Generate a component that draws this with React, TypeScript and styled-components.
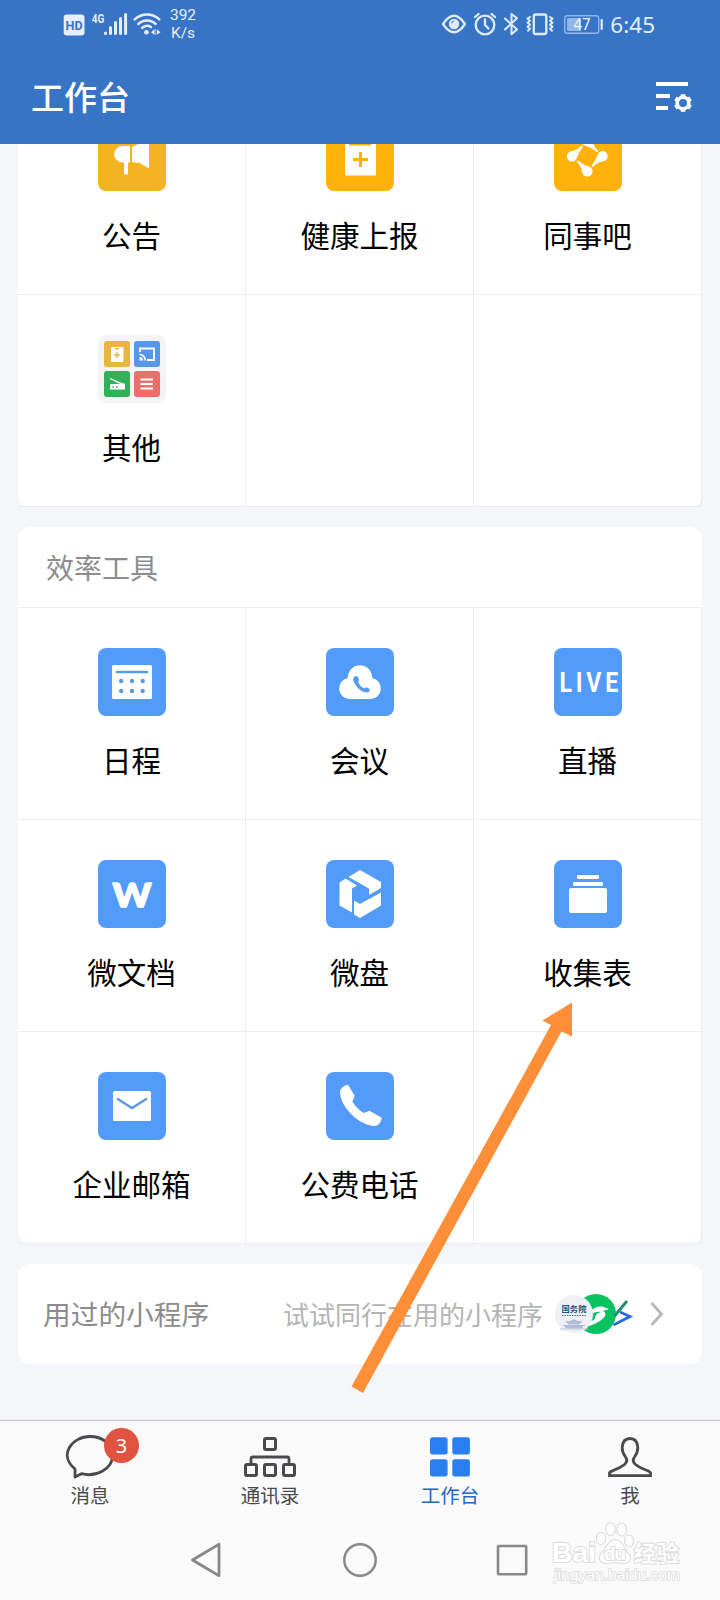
import React from 'react';
import styled, { createGlobalStyle } from 'styled-components';

const GlobalStyle = createGlobalStyle`
  * { box-sizing: border-box; }
  body { margin: 0; background: #f4f6fa; }
  svg { display: block; flex: none; }
`;

const Screen = styled.div`
  position: relative;
  width: 720px;
  height: 1600px;
  display: flex;
  flex-direction: column;
  overflow: hidden;
  background: #f4f6fa;
  font-family: 'Noto Sans CJK SC', sans-serif;
`;

const Header = styled.header`
  height: 144px;
  flex: none;
  background: #3874c6;
  color: #fff;
`;

const StatusBar = styled.div`
  height: 48px;
  display: flex;
  align-items: center;
  padding: 1px 65px 0 63px;
  font-family: 'Noto Sans', sans-serif;
`;

const NetSpeed = styled.div`
  width: 30px;
  margin: -1px auto 0 5px;
  text-align: center;
  font: 15.5px/18px Roboto, sans-serif;
  color: #e6eefa;
`;

const Clock = styled.span`
  margin-left: 6px;
  font-size: 22.5px;
  line-height: 47px;
  color: #e3edfa;
`;

const TitleBar = styled.div`
  height: 96px;
  display: flex;
  align-items: center;
  justify-content: space-between;
  padding: 2px 27px 0 31px;
`;

const Title = styled.h1`
  margin: -3px 0 0;
  font-size: 33px;
  line-height: 48px;
  font-weight: 500;
`;

const Content = styled.main`
  flex: 1;
  min-height: 0;
  overflow: hidden;
  display: flex;
  flex-direction: column;
  gap: 20px;
  padding-left: 18px;
`;

const Card = styled.section<{ $pull?: number }>`
  width: 684px;
  flex: none;
  margin-top: ${(p) => p.$pull ?? 0}px;
  background: #fff;
  border-radius: 12px;
`;

const CardTitle = styled.h2`
  margin: 0;
  height: 81px;
  padding-left: 28px;
  border-bottom: 1px solid #ebecee;
  font-size: 28px;
  line-height: 80px;
  font-weight: 400;
  color: #8c8c8c;
`;

const Grid = styled.div`
  display: grid;
  grid-template-columns: repeat(3, 228px);
  grid-auto-rows: 212px;
`;

const Cell = styled.div`
  display: flex;
  flex-direction: column;
  align-items: center;
  padding: 40px 0 0;
  border-right: 1px solid #ebecee;
  border-bottom: 1px solid #ebecee;
`;

const Tile = styled.div<{ $color: string }>`
  width: 68px;
  height: 68px;
  flex: none;
  border-radius: 8px;
  overflow: hidden;
  background: ${(p) => p.$color};
`;

const Label = styled.span`
  margin-top: 21px;
  font-size: 29.5px;
  line-height: 44px;
  color: #000;
`;

const MiniCard = styled.section`
  width: 684px;
  height: 100px;
  flex: none;
  display: flex;
  align-items: center;
  padding: 0 38px 0 25px;
  border-radius: 12px;
  background: #fff;
`;

const MiniTitle = styled.span`
  flex: 1;
  margin-top: -2px;
  font-size: 27.7px;
  color: #8c8c8c;
`;

const MiniHint = styled.span`
  font-size: 26px;
  color: #b4b4b4;
  margin: -2px 11px 0 0;
`;

const TabBar = styled.nav`
  height: 100px;
  flex: none;
  display: grid;
  grid-template-columns: repeat(4, 1fr);
  border-top: 1px solid #c3c4c8;
  background: #fafafa;
`;

const Tab = styled.div<{ $active?: boolean }>`
  position: relative;
  display: flex;
  flex-direction: column;
  align-items: center;
  padding-top: 12px;
  color: ${(p) => (p.$active ? '#2268c0' : '#484a4e')};
  font-size: 19.5px;
  line-height: 28px;
`;

const TabLabel = styled.span`
  margin-top: 2px;
`;

const Badge = styled.span`
  position: absolute;
  left: 104px;
  top: 7px;
  width: 35px;
  height: 35px;
  border-radius: 50%;
  background: #e15241;
  color: #fff;
  text-align: center;
  font: 20px/35px 'Noto Sans', sans-serif;
`;

const SystemNav = styled.div`
  height: 80px;
  flex: none;
  display: flex;
  justify-content: center;
  gap: 116px;
  padding-top: 20px;
  background: #fafafa;
`;

const ArrowLayer = styled.svg`
  position: absolute;
  left: 340px;
  top: 990px;
  pointer-events: none;
`;

const Watermark = styled.svg`
  position: absolute;
  left: 545px;
  top: 1515px;
  pointer-events: none;
`;

const blue = '#539bf9';

const StatusLeft = () => (
  <svg width="100" height="30" viewBox="63 10 100 30">
    <rect x="63.7" y="14.5" width="20.8" height="21" rx="3" fill="#e6eefa" />
    <text x="74.1" y="30" textAnchor="middle" fontFamily="Roboto" fontSize="13.5" fontWeight="700" fill="#3874c6" textLength="17" lengthAdjust="spacingAndGlyphs">HD</text>
    <text x="91.8" y="22.5" fontFamily="Roboto" fontSize="13" fontWeight="700" fill="#e6eefa" textLength="12.5" lengthAdjust="spacingAndGlyphs">4G</text>
    <path d="M105.5 33v.6M110.5 27.5v6M115.5 22.5v11M120.5 18.500v15M125.600 14.500v19" stroke="#e6eefa" strokeWidth="3" strokeLinecap="round" />
    <g fill="none" stroke="#e6eefa" strokeWidth="2.500" strokeLinecap="round">
      <path d="M134.700 19.300a18 18 0 0 1 24.600 0M138.300 24a12.500 12.500 0 0 1 17.400 0M142 28a7.500 7.500 0 0 1 9-1" />
    </g>
    <circle cx="146.500" cy="32.300" r="2.300" fill="#e6eefa" />
    <path d="M151 32.200l3.300-3v5.500zM160.500 32.200l-3.700-3v5.500z" fill="#e6eefa" />
    <path d="M155 29v6" stroke="#e6eefa" strokeWidth=".8" />
  </svg>
);

const StatusRight = () => (
  <svg width="164" height="30" viewBox="441 10 164 30" fill="none" stroke="#e0ebfa" strokeWidth="2.300" strokeLinecap="round" strokeLinejoin="round">
    <path d="M444 24q11-16.500 22 0q-11 16.500-22 0z" />
    <circle cx="455" cy="24" r="5.200" fill="#e0ebfa" stroke="none" />
    <path d="M452.800 23a2.500 2.500 0 0 1 2-2" stroke="#3874c6" strokeWidth="1" />
    <circle cx="486" cy="25" r="9.300" />
    <path d="M486 19.500V25l3.500 3.500M476 17l3.500-3M492.500 14l3.500 3" />
    <path d="M506 18.500L518 29.500l-5.500 4.700V14l5.500 4.300L506 29.500" strokeWidth="2" />
    <rect x="534.800" y="14.500" width="12.500" height="19.500" rx="2" />
    <path d="M531 17l-2.500 1.700 2.500 2-2.500 2 2.500 2-2.500 2 2.500 2-2 2M551 17l2.500 1.700-2.500 2 2.500 2-2.500 2 2.500 2-2.500 2 2 2" strokeWidth="2" />
    <rect x="565.700" y="15.700" width="34" height="17.600" rx="2.500" stroke="#90b6ea" strokeWidth="1.400" />
    <rect x="568" y="18" width="14" height="13" rx="1" fill="#90b6ea" stroke="none" />
    <text x="583" y="29.800" textAnchor="middle" fontFamily="Noto Sans" fontSize="15.500" fill="#f2f7fd" stroke="none" textLength="17" lengthAdjust="spacingAndGlyphs">47</text>
    <path d="M602.700 20v9" strokeWidth="2.200" />
  </svg>
);

const SettingsIcon = () => (
  <svg width="38" height="34" viewBox="655 80 38 34">
    <path d="M656 84h32M656 96h14M656 108h12" stroke="#fff" strokeWidth="4" />
    <circle cx="683" cy="103" r="5.800" fill="none" stroke="#fff" strokeWidth="3.600" />
    <g stroke="#fff" strokeWidth="4.600">
      {[0, 60, 120, 180, 240, 300].map((a) => (
        <path key={a} d="M683 96.800v-2.600" transform={`rotate(${a} 683 103)`} />
      ))}
    </g>
  </svg>
);

const Art = ({ children }: { children: React.ReactNode }) => (
  <svg width="68" height="68" viewBox="0 0 68 68" fill="#fff">{children}</svg>
);

const HornArt = () => (
  <Art>
    <path d="M32 23h-7.500a8.500 8.200 0 0 0 0 16.400H32zM34 24l17-8v29.500l-10-5.700-7-.6z" />
    <path d="M26 38h4v13q-2 1-4 0z" />
  </Art>
);

const HealthArt = () => (
  <Art>
    <path d="M19 16h31v36.500H19z" />
    <path d="M23 16h22v6.500H23z" fill="#ffb30a" />
    <path d="M34.500 29v15M27 36.500h15" stroke="#ffb30a" strokeWidth="3" />
  </Art>
);

const PeersArt = () => (
  <Art>
    {[0, 90, 180, 270].map((a) => (
      <path key={a} transform={`rotate(${a} 33.300 33.300)`} d="M22.300 38.600L23.500 37.600Q30 42.500 37 44.600A5.300 5.300 0 1 1 28 48.500Q27.500 43.500 22.300 38.600z" />
    ))}
  </Art>
);

const OtherArt = () => (
  <Art>
    <rect x="6" y="6" width="26" height="26" rx="3" fill="#e9b440" />
    <rect x="36" y="6" width="26" height="26" rx="3" fill="#5796e8" />
    <rect x="6" y="36" width="26" height="26" rx="3" fill="#31b057" />
    <rect x="36" y="36" width="26" height="26" rx="3" fill="#eb6e6b" />
    <rect x="13" y="12" width="12.500" height="15" rx="1" />
    <path d="M16 20h6M19 17v6M17 13.800h4" stroke="#e9b440" strokeWidth="1.500" />
    <path d="M42 17v-3.500h14V25h-7" fill="none" stroke="#fff" strokeWidth="1.800" />
    <path d="M41.500 18.500q6 .5 6.500 7h-1.500q-.3-4.700-5-5.500zM41.500 22q3.500.3 3.700 3.500h-3.700z" />
    <path d="M12 43l13 5.500h2v6H12v-5.500h10l-10-5z" />
    <path d="M14.500 52h1.500M18 52h1.500" stroke="#31b057" strokeWidth="1.500" />
    <path d="M42.500 44.500h12.500M42.500 49h12.500M42.500 53.500h12.500" stroke="#fff" strokeWidth="1.800" />
  </Art>
);

const CalendarArt = () => (
  <Art>
    <rect x="14" y="17" width="40" height="34" rx="1.500" />
    <path d="M19 24h30" stroke="#5b99e0" strokeWidth="2.500" strokeLinecap="round" />
    {[23.200, 34, 44.700].map((x) => (
      <g key={x} fill="#5b99e0"><circle cx={x} cy="33" r="2.200" /><circle cx={x} cy="43" r="2.200" /></g>
    ))}
  </Art>
);

const CloudArt = () => (
  <Art>
    <path d="M23.500 51a10.600 10.600 0 0 1-1.800-21C22.500 13 45.500 13 46.300 30A10.600 10.600 0 0 1 44.500 51z" />
    <path d="M29 28.500q2.500-1.500 3.500 1.500t-.500 4q2 4.500 6 6.500 2-2 5.500.500 1 2.500-2 3.500-5 0-9.500-4.500-4.500-5-5-9 .500-2 2-2.500z" fill={blue} />
  </Art>
);

const LiveArt = () => (
  <Art>
    <g transform="scale(.84 1)">
      <text x="6.500" y="43.800" fontFamily="Roboto" fontWeight="700" fontSize="27.500" textLength="70" lengthAdjust="spacing">LIVE</text>
    </g>
  </Art>
);

const DocArt = () => (
  <Art>
    <text x="34" y="46.500" textAnchor="middle" fontFamily="Lato" fontWeight="900" fontSize="32.500" stroke="#fff" strokeWidth="1.400" strokeLinejoin="round" textLength="39" lengthAdjust="spacingAndGlyphs">W</text>
  </Art>
);

const DriveArt = () => (
  <Art>
    <path d="M22.500 17L34 10l21 12v6l-12 7v-6.500z" />
    <path d="M13.500 22.500l6-4 11.500 7-5 3v24l-12.500-7z" />
    <path d="M28 40.500l6 3.500 21-11.500v13L34 58l-6-3.500z" />
  </Art>
);

const CollectArt = () => (
  <Art>
    <rect x="23" y="15" width="22" height="4" rx="1" />
    <rect x="19" y="22" width="30" height="4" rx="1.500" />
    <rect x="15" y="28" width="38" height="25" rx="2" />
  </Art>
);

const MailArt = () => (
  <Art>
    <rect x="15" y="19" width="38" height="30" rx="1.500" />
    <path d="M19 26.500l15 9.500 15-9.500" fill="none" stroke="#5b99e0" strokeWidth="2.400" />
  </Art>
);

const PhoneArt = () => (
  <Art>
    <path d="M22 12.800l6.700 11-2.300 5.600q4 7 11.600 11.600l5.500-2.300 12.300 7q-1.500 8.800-8.500 8.300Q35 52.500 24.500 41.500 14.500 31 14 20.500q.5-6.500 8-7.700z" />
  </Art>
);

type App = { name: string; color: string; art: () => React.ReactElement } | null;

const officeApps: App[] = [
  { name: '公告', color: '#f4b41f', art: HornArt },
  { name: '健康上报', color: '#ffb30a', art: HealthArt },
  { name: '同事吧', color: '#ffb30a', art: PeersArt },
  { name: '其他', color: '#f4f4f5', art: OtherArt },
  null,
  null,
];

const toolApps: App[] = [
  { name: '日程', color: blue, art: CalendarArt },
  { name: '会议', color: blue, art: CloudArt },
  { name: '直播', color: blue, art: LiveArt },
  { name: '微文档', color: blue, art: DocArt },
  { name: '微盘', color: blue, art: DriveArt },
  { name: '收集表', color: blue, art: CollectArt },
  { name: '企业邮箱', color: blue, art: MailArt },
  { name: '公费电话', color: blue, art: PhoneArt },
  null,
];

const AppGrid = ({ apps }: { apps: App[] }) => (
  <Grid>
    {apps.map((app, i) => (
      <Cell key={i}>
        {app && (
          <>
            <Tile $color={app.color}><app.art /></Tile>
            <Label>{app.name}</Label>
          </>
        )}
      </Cell>
    ))}
  </Grid>
);

const MiniLogos = () => (
  <svg width="110" height="42" viewBox="554 1293 110 42">
    <circle cx="596" cy="1314" r="20" fill="#0bc160" />
    <path d="M590 1312q4-6 12-5.500l7 2.500q-3 1.500-6 1.500 2.500 1.500 2.300 5-3 6-16.300 10.500z" fill="#fff" />
    <path d="M591 1315q4-4 10-3-6 1.500-6 6 0 2-4 3z" fill="#0bc160" />
    <circle cx="574" cy="1314" r="19" fill="#eef0f6" />
    <text x="574" y="1312.300" textAnchor="middle" fontFamily="Noto Sans CJK SC" fontSize="8.300" fontWeight="700" fill="#175a7d">国务院</text>
    <path d="M562 1315.500h25" stroke="#566c80" strokeWidth="1.200" strokeDasharray="1.500 1" />
    <path d="M566 1321.500q7-1 8-2.500 1 1.500 8 2.500v1.500h-16zM568 1323h12v1.500h-12zM563 1325h22v1h-22zM565 1326h18v2.500h-18z" fill="#b2bcd8" />
    <path d="M560 1329h28" stroke="#c1c9df" />
    <path d="M627 1301l-12.500 15" stroke="#168f70" strokeWidth="2.800" />
    <path d="M620 1312l10 4.500-16.500 8.500" fill="none" stroke="#286ddd" strokeWidth="2.800" />
    <path d="M651.500 1303l10 11-10 11" fill="none" stroke="#b7b7b7" strokeWidth="2.800" />
  </svg>
);

const ChatIcon = () => (
  <svg width="50" height="46" viewBox="65 1433 50 46" fill="none" stroke="#484a4e" strokeWidth="2.800" strokeLinejoin="round">
    <path d="M75 1469C58 1455 72 1436.500 90 1436.500c12 0 22.500 7.500 22.500 19 0 14-17 22-31 18.200L75 1477z" />
  </svg>
);

const ContactsIcon = () => (
  <svg width="54" height="46" viewBox="243 1433 54 46" fill="none" stroke="#484a4e" strokeWidth="3">
    <rect x="264.500" y="1438.500" width="11" height="11" rx="1.500" />
    <rect x="245.500" y="1464.500" width="11" height="11" rx="1.500" />
    <rect x="264.500" y="1464.500" width="11" height="11" rx="1.500" />
    <rect x="283.500" y="1464.500" width="11" height="11" rx="1.500" />
    <path d="M251 1464v-5q0-2 2-2h34q2 0 2 2v5" strokeWidth="2.800" />
  </svg>
);

const WorkIcon = () => (
  <svg width="40" height="46" viewBox="430 1433 40 46" fill="#2a7ff0">
    <rect x="430" y="1437.300" width="17.600" height="17.200" rx="2.500" />
    <rect x="452.300" y="1437.300" width="17.600" height="17.200" rx="2.500" />
    <rect x="430" y="1459.300" width="17.600" height="17.200" rx="2.500" />
    <rect x="452.300" y="1459.300" width="17.600" height="17.200" rx="2.500" />
  </svg>
);

const MeIcon = () => (
  <svg width="46" height="46" viewBox="607 1433 46 46" fill="none" stroke="#484a4e" strokeWidth="2.800">
    <path d="M609.500 1475.600v-2.800q1-1.500 4-2.500 7-2.500 11-5.800 4-3.500 1-7.500-3.500-5-3.300-9.500.5-9 7.800-9t7.800 9q.2 4.500-3.300 9.500-3 4 1 7.500 4 3.300 11 5.800 3 1 4 2.500v2.800z" />
  </svg>
);

export default function App() {
  return (
    <Screen>
      <GlobalStyle />
      <Header>
        <StatusBar>
          <StatusLeft />
          <NetSpeed>392<br />K/s</NetSpeed>
          <StatusRight />
          <Clock>6:45</Clock>
        </StatusBar>
        <TitleBar>
          <Title>工作台</Title>
          <SettingsIcon />
        </TitleBar>
      </Header>
      <Content>
        <Card $pull={-61}>
          <AppGrid apps={officeApps} />
        </Card>
        <Card>
          <CardTitle>效率工具</CardTitle>
          <AppGrid apps={toolApps} />
        </Card>
        <MiniCard>
          <MiniTitle>用过的小程序</MiniTitle>
          <MiniHint>试试同行在用的小程序</MiniHint>
          <MiniLogos />
        </MiniCard>
      </Content>
      <TabBar>
        <Tab><ChatIcon /><TabLabel>消息</TabLabel><Badge>3</Badge></Tab>
        <Tab><ContactsIcon /><TabLabel>通讯录</TabLabel></Tab>
        <Tab $active><WorkIcon /><TabLabel>工作台</TabLabel></Tab>
        <Tab><MeIcon /><TabLabel>我</TabLabel></Tab>
      </TabBar>
      <SystemNav>
        <svg width="36" height="40" viewBox="190 1540 36 40"><path d="M192.500 1560l26.500-15.700v31.400z" fill="none" stroke="#888" strokeWidth="2.800" strokeLinejoin="round" /></svg>
        <svg width="36" height="40" viewBox="342 1540 36 40"><circle cx="360" cy="1560" r="15.700" fill="none" stroke="#888" strokeWidth="2.500" /></svg>
        <svg width="36" height="40" viewBox="494 1540 36 40"><rect x="498" y="1546" width="28.200" height="28.200" rx="1" fill="none" stroke="#888" strokeWidth="2.600" /></svg>
      </SystemNav>
      <ArrowLayer width="250" height="420" viewBox="340 990 250 420">
        <path d="M572 1002.500v34l-10.500-5L363 1393l-11.500-6.500L551 1025l-8.500-4.500z" fill="#ff8e39" />
      </ArrowLayer>
      <Watermark width="150" height="75" viewBox="545 1515 150 75" fill="#fff" stroke="#dcdcdc" strokeWidth="1.200">
        <ellipse cx="601" cy="1538.500" rx="4.600" ry="6" />
        <ellipse cx="610.500" cy="1529" rx="4.800" ry="6.500" />
        <ellipse cx="621.700" cy="1529.500" rx="4.800" ry="6.500" />
        <ellipse cx="629" cy="1541" rx="4.600" ry="6" />
        <path d="M615 1539.500q5 0 8.500 6.500t6.500 9q2 8-6 8.500-9-1.500-18 0-9-.5-6-8.500 3-3 6.500-9t8.500-6.500z" />
        <g fontFamily="Liberation Sans" fontWeight="700" paintOrder="stroke" strokeWidth="2">
          <text x="552" y="1562" fontSize="28" textLength="44" lengthAdjust="spacingAndGlyphs">Bai</text>
          <text x="604" y="1560" fontSize="19" textLength="22">du</text>
          <text x="634" y="1561" fontFamily="Noto Sans CJK SC" fontSize="22" textLength="45">经验</text>
          <text x="554" y="1580" fontFamily="Liberation Sans" fontWeight="400" fontSize="15.500" strokeWidth="1.600" textLength="126">jingyan.baidu.com</text>
        </g>
      </Watermark>
    </Screen>
  );
}
